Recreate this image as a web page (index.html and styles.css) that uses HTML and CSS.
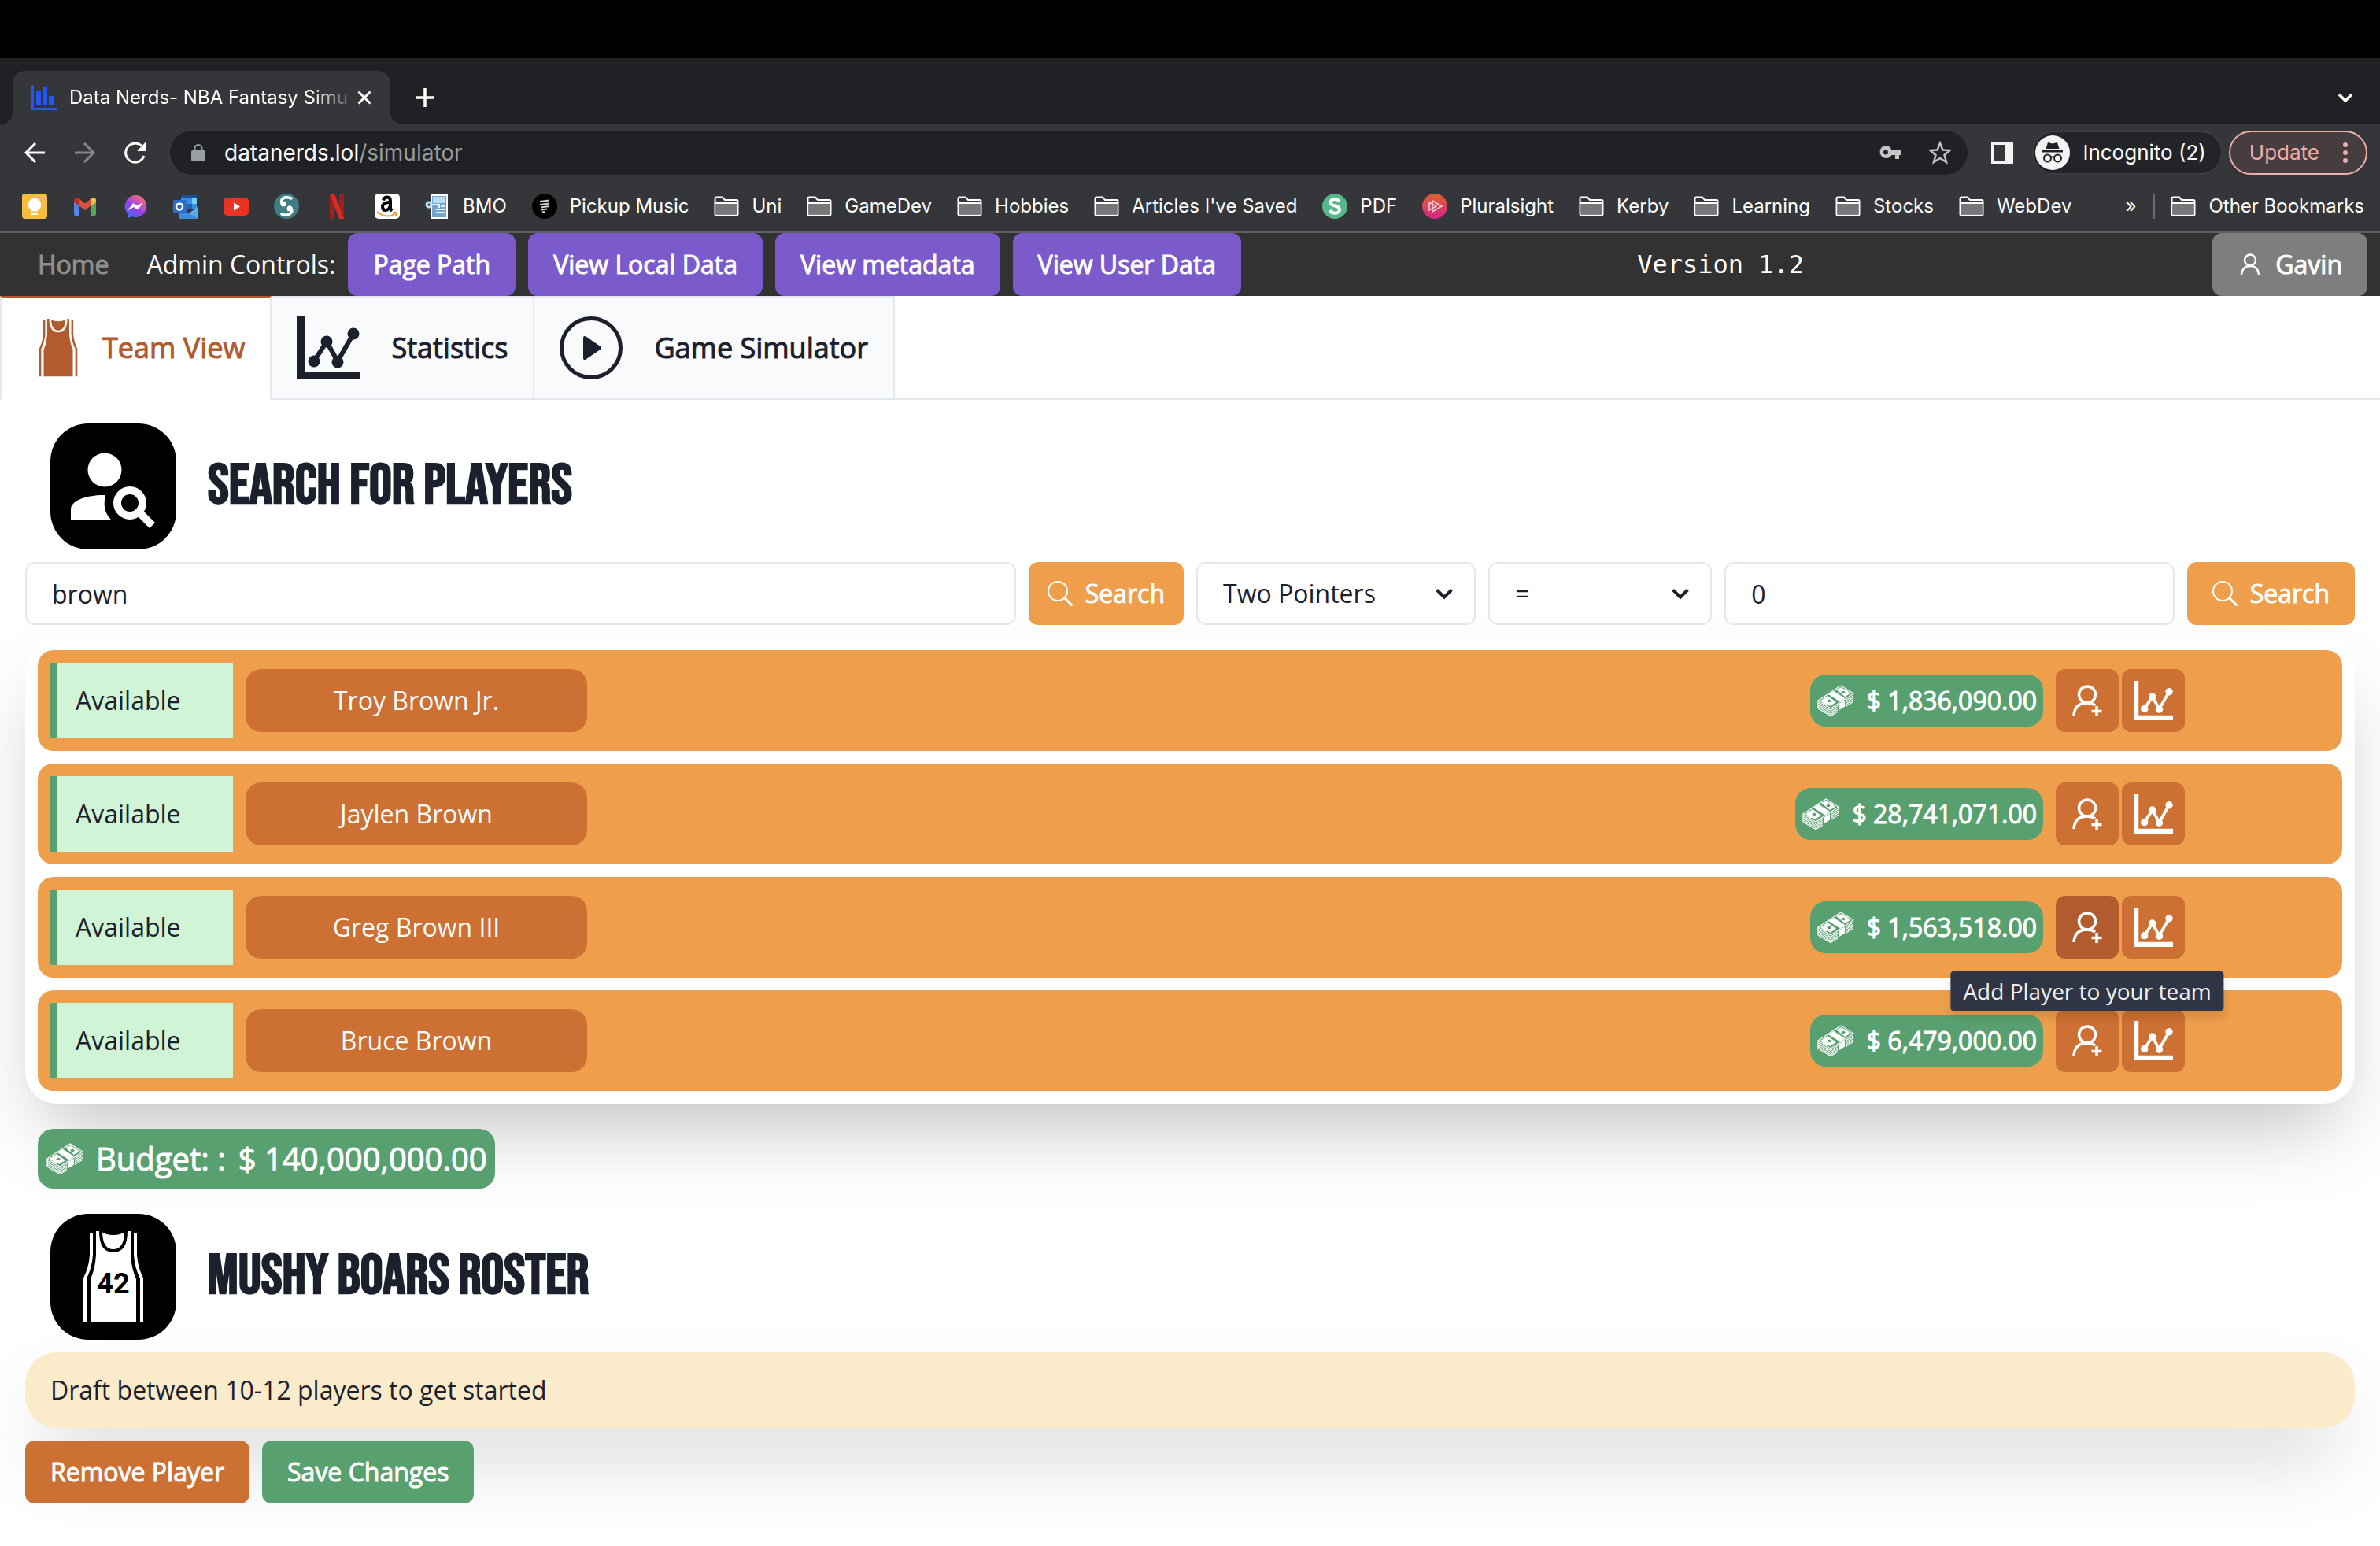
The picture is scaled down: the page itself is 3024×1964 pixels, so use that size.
FILE: index.html
```html
<!DOCTYPE html>
<html lang="en">
<head>
<meta charset="utf-8">
<title>Data Nerds- NBA Fantasy Simulator</title>
<link rel="stylesheet" href="styles.css">
</head>
<body>
<svg class="sprite" aria-hidden="true">
  <symbol id="folder" viewBox="0 0 32 26"><path d="M1.500 22.500V3Q1.500 1.500 3 1.500H11L14 5H29Q30.500 5 30.500 6.500V23Q30.500 24.500 29 24.500H3Q1.500 24.500 1.500 23Z" fill="#35363a" stroke="#fff" stroke-width="2"/><path d="M2.500 10H29.500V23.500H2.500Z" fill="#76777a"/><path d="M2 9H30" stroke="#fff" stroke-width="2"/></symbol>
  <symbol id="jersey" viewBox="0 0 76 116"><path d="M16 0H22Q28 5 38 5T54 0H60V30Q61 48 67 61V115H9V61Q15 48 16 30Z" fill="currentColor"/><path d="M10 2V30Q9 46 2 60V115M66 2V30Q67 46 74 60V115" fill="none" stroke="currentColor" stroke-width="4"/><path d="M22 0Q22 25 38 25T54 0" fill="none" stroke="var(--cut)" stroke-width="4"/></symbol>
  <symbol id="chart" viewBox="0 0 80 80"><path d="M0 0H10V70H80V80H0Z" fill="currentColor"/><path d="M22 57 38 32 52 57 72 22" fill="none" stroke="currentColor" stroke-width="6"/><g fill="currentColor"><circle cx="22" cy="57" r="7.500"/><circle cx="38" cy="32" r="7.500"/><circle cx="52" cy="58" r="7.500"/><circle cx="72" cy="22" r="7.500"/></g></symbol>
  <symbol id="lens" viewBox="0 0 32 32"><circle cx="13" cy="13" r="12" fill="none" stroke="currentColor" stroke-width="2"/><path d="M22 22 30.500 30.500" stroke="currentColor" stroke-width="3" stroke-linecap="round"/></symbol>
  <symbol id="adduser" viewBox="0 0 40 40"><circle cx="20" cy="12.500" r="10.500" fill="none" stroke="currentColor" stroke-width="3.500"/><path d="M3 39Q4 23 20 23Q26 23 30 26M32 27V40M25.500 33.500H38.500" fill="none" stroke="currentColor" stroke-width="3.500"/></symbol>
  <symbol id="cash" viewBox="0 0 48 40"><path d="M2 20 31 1 47 11 18 30Z" fill="none" stroke="currentColor" stroke-width="1.200"/><path d="M15 12 22 8 36 17 30 21.500Z" fill="currentColor"/><path d="M5 20 14 14 25 22 17 27Q15 24 11 25Z" fill="currentColor"/><path d="M25 6 32 3Q34 6 38 6L43 11 36 15Z" fill="currentColor"/><ellipse cx="16" cy="20.500" rx="2.500" ry="1.800" fill="#59a070"/><ellipse cx="34" cy="9.500" rx="2.500" ry="1.800" fill="#59a070"/><path d="M2 22.500 18 32.500 27 26.500M2 25 18 35 27 29M2 27.500 18 37.500 27 31.500M2 30 18 39.500 27 34M2 20V30M37 20 47 13.500M37 22.500 47 16M37 25 47 18.500M37 27.500 47 21" fill="none" stroke="currentColor" stroke-width="1.300"/><path d="M29 24 36 19.500V27.500L29 32Z" fill="currentColor"/></symbol>
  <symbol id="chevron" viewBox="0 0 24 24"><path d="M4 8 12 16 20 8" fill="none" stroke="currentColor" stroke-width="3.500"/></symbol>
</svg>

<div class="menu-gap"></div>
<header class="browser">
  <div class="tabstrip">
    <div class="browser-tab">
      <svg class="favicon" viewBox="0 0 32 32"><path d="M1.500 0V30.500H32" fill="none" stroke="#2456f5" stroke-width="3"/><path d="M6 8H12V26H6ZM14 2H20V26H14ZM22 14H28V26H22Z" fill="#2456f5"/></svg>
      <span class="browser-tab-title">Data Nerds- NBA Fantasy Simu</span>
      <button class="plain" aria-label="Close tab"><svg width="18" height="18" viewBox="0 0 18 18"><path d="M1.500 1.500 16.500 16.500M16.500 1.500 1.500 16.500" stroke="#fff" stroke-width="3"/></svg></button>
    </div>
    <button class="plain new-tab" aria-label="New tab"><svg width="26" height="26" viewBox="0 0 26 26"><path d="M13 1V25M1 13H25" stroke="#fff" stroke-width="3.500"/></svg></button>
    <button class="plain tab-search" aria-label="Search tabs"><svg width="24" height="24"><use href="#chevron"/></svg></button>
  </div>

  <div class="toolbar">
    <div class="history">
      <button class="plain" aria-label="Back"><svg width="28" height="28" viewBox="0 0 28 28"><path d="M27 14H3M15 2 3 14 15 26" fill="none" stroke="#fff" stroke-width="3"/></svg></button>
      <button class="plain" aria-label="Forward"><svg width="28" height="28" viewBox="0 0 28 28"><path d="M1 14H25M13 2 25 14 13 26" fill="none" stroke="#86878a" stroke-width="3"/></svg></button>
      <button class="plain" aria-label="Reload"><svg width="28" height="28" viewBox="0 0 28 28"><path d="M25 18A12 12 0 1 1 22 5.500" fill="none" stroke="#fff" stroke-width="3"/><path d="M27.500 0V12H16Z" fill="#fff"/></svg></button>
    </div>
    <div class="address">
      <svg width="18" height="22" viewBox="0 0 18 22"><rect y="8" width="18" height="14" rx="2" fill="#9aa0a6"/><path d="M4.500 9V5.500A4.500 4.500 0 0 1 13.500 5.500V9" fill="none" stroke="#9aa0a6" stroke-width="2"/></svg>
      <span class="url"><b>datanerds.lol</b>/simulator</span>
      <svg width="28" height="18" viewBox="0 0 28 18"><path fill="#c4c5c7" fill-rule="evenodd" d="M8 0A8 8 0 0 1 15.500 6H28V12H25V17H20V12H15.500A8 8 0 1 1 8 0ZM8 5.500A3 3 0 1 0 8 11.500 3 3 0 0 0 8 5.500Z"/></svg>
      <svg width="30" height="30" viewBox="0 0 30 30"><path d="M15 3 18.500 11.500 27.500 12 20.500 18 23 27 15 22 7 27 9.500 18 2.500 12 11.500 11.500Z" fill="none" stroke="#c4c5c7" stroke-width="2.500"/></svg>
    </div>
    <svg class="panel-icon" width="28" height="28" viewBox="0 0 28 28"><path fill="#f1f3f4" fill-rule="evenodd" d="M0 0H28V28H0ZM4 4V24H18V4Z"/></svg>
    <div class="incognito">
      <svg width="44" height="44" viewBox="0 0 44 44"><circle cx="22" cy="22" r="22" fill="#f1f3f4"/><path d="M16 9 22 10.500 28 9 30.500 17H13.500ZM9 19H35V21.500H9Z" fill="#202124"/><g fill="none" stroke="#202124" stroke-width="2"><circle cx="15.500" cy="29" r="4.500"/><circle cx="28.500" cy="29" r="4.500"/><path d="M20 28Q22 26.500 24 28"/></g></svg>
      <span>Incognito (2)</span>
    </div>
    <button class="update">Update <svg width="6" height="28" viewBox="0 0 6 28" fill="#f0aea6"><circle cx="3" cy="4" r="3"/><circle cx="3" cy="14" r="3"/><circle cx="3" cy="24" r="3"/></svg></button>
  </div>

  <nav class="bookmarks" aria-label="Bookmarks">
    <a href="#keep" aria-label="Keep"><svg width="32" height="32" viewBox="0 0 32 32"><rect width="32" height="32" rx="4" fill="#f5bd42"/><path d="M16 6A8 8 0 0 1 20 21V22.500H12V21A8 8 0 0 1 16 6ZM12 24H20V27H12Z" fill="#fff"/></svg></a>
    <a href="#gmail" aria-label="Gmail"><svg width="32" height="32" viewBox="0 0 32 32"><path d="M2 10 9 15V28H4Q2 28 2 26Z" fill="#5383ec"/><path d="M30 10 23 15V28H28Q30 28 30 26Z" fill="#58a65c"/><path d="M2 11V8Q3 3 8 6L9 7V16Z" fill="#b63227"/><path d="M30 11V8Q29 3 24 6L23 7V16Z" fill="#f1bf42"/><path d="M8 6 16 12.500 24 6V15L16 21 8 15Z" fill="#d95040"/></svg></a>
    <a href="#messenger" aria-label="Messenger"><svg width="32" height="32" viewBox="0 0 32 32"><defs><linearGradient id="msg" x1="0" y1="1" x2=".7" y2="0"><stop offset="0" stop-color="#2d7bf6"/><stop offset=".5" stop-color="#9040f2"/><stop offset="1" stop-color="#f76d7a"/></linearGradient></defs><path d="M16 2A14 14 0 1 1 11 29L7 31V26A14 14 0 0 1 16 2Z" fill="url(#msg)"/><path d="M7 20.500 13.500 12.500 18 16 25 12 19 20 14 16.500Z" fill="#fff" stroke="#fff" stroke-linejoin="round"/></svg></a>
    <a href="#outlook" aria-label="Outlook"><svg width="32" height="32" viewBox="0 0 32 32"><path d="M10 2H30V20H10Z" fill="#3a8ee0"/><path d="M10 2H30V6H10Z" fill="#1b5297"/><path d="M24 6H30V13H24Z" fill="#6fd0fb"/><path d="M17 13H24V20H17Z" fill="#1c64b8"/><path d="M8 18 20 25 32 16V32H8Z" fill="#55aee8"/><path d="M8 18 32 32H8Z" fill="#3e8bd6"/><rect y="8" width="17" height="17" rx="1" fill="#2a6dcc"/><circle cx="8" cy="16.500" r="4" fill="none" stroke="#fff" stroke-width="2.500"/></svg></a>
    <a href="#youtube" aria-label="YouTube"><svg width="32" height="32" viewBox="0 0 32 32"><rect y="5" width="32" height="23" rx="5" fill="#ea3323"/><path d="M13 11.500 21 16.500 13 21.500Z" fill="#fff"/></svg></a>
    <a href="#scribe" aria-label="Scribe"><svg width="32" height="32" viewBox="0 0 32 32"><circle cx="16" cy="16" r="16" fill="#407d85"/><path d="M22 6C12 2 6 9 12 14M20 17C27 22 20 30 10 26" fill="none" stroke="#fff" stroke-width="3.500" stroke-linecap="round"/><circle cx="12" cy="13" r="3.500" fill="#fff"/><circle cx="20" cy="19" r="3.500" fill="#fff"/></svg></a>
    <a href="#netflix" aria-label="Netflix"><svg width="32" height="32" viewBox="0 0 32 32"><path d="M7 0H13V32H7ZM19 0H25V32H19Z" fill="#9e1f1b"/><path d="M7 0H13L25 32H19Z" fill="#d92c27"/></svg></a>
    <a href="#amazon" aria-label="Amazon"><svg width="32" height="32" viewBox="0 0 32 32"><rect width="32" height="32" rx="5" fill="#fff"/><path d="M11 8.500Q12 4.500 16 4.500T20 9V18Q20 20 22 22" fill="none" stroke="#000" stroke-width="4"/><path d="M19 11Q10 11 10 17Q10 21 14 21Q18 21 19.500 16" fill="none" stroke="#000" stroke-width="4"/><path d="M3 23Q15 33 27 25M23 24H28L27 28" fill="none" stroke="#f09c38" stroke-width="2"/></svg></a>
    <a href="#bmo"><svg width="32" height="32" viewBox="0 0 32 32"><path d="M8 2H28V31H8Z" fill="#6fa5cf" stroke="#fff" stroke-width="2"/><path d="M10 4H26V12H10Z" fill="#b9dcf2"/><circle cx="5" cy="14" r="3" fill="none" stroke="#bcdcf4" stroke-width="3"/><path d="M8 14H18V18M14 20H25M14 24H25M20 16H25" stroke="#e6f3fc" stroke-width="2" fill="none"/></svg>BMO</a>
    <a href="#pickup"><svg width="32" height="32" viewBox="0 0 32 32"><circle cx="16" cy="16" r="16"/><path d="M10 10 22 8.500M10 14 22 12.500M11 17.500 22 16M12 20.500 19 19.500M13 23.500 16 23" stroke="#cfcfcf" stroke-width="2"/></svg>Pickup Music</a>
    <a href="#uni"><svg width="32" height="26"><use href="#folder"/></svg>Uni</a>
    <a href="#gamedev"><svg width="32" height="26"><use href="#folder"/></svg>GameDev</a>
    <a href="#hobbies"><svg width="32" height="26"><use href="#folder"/></svg>Hobbies</a>
    <a href="#articles"><svg width="32" height="26"><use href="#folder"/></svg>Articles I've Saved</a>
    <a href="#pdf"><svg width="32" height="32" viewBox="0 0 32 32"><circle cx="16" cy="16" r="16" fill="#55b98a"/><path d="M22 10C18 5 10 7 10.500 11.500C11 17 22 14 22 20C22 26 12 26 9.500 21" fill="none" stroke="#fff" stroke-width="4"/></svg>PDF</a>
    <a href="#pluralsight"><svg width="32" height="32" viewBox="0 0 32 32"><defs><linearGradient id="ps" x1="0" y1="0" x2="0" y2="1"><stop offset="0" stop-color="#e0622f"/><stop offset="1" stop-color="#d6248c"/></linearGradient></defs><circle cx="16" cy="16" r="16" fill="url(#ps)"/><path d="M13 9 25 16 13 23ZM9 11 18 16 9 21Z" fill="none" stroke="#fbd3d8" stroke-width="1.500"/></svg>Pluralsight</a>
    <a href="#kerby"><svg width="32" height="26"><use href="#folder"/></svg>Kerby</a>
    <a href="#learning"><svg width="32" height="26"><use href="#folder"/></svg>Learning</a>
    <a href="#stocks"><svg width="32" height="26"><use href="#folder"/></svg>Stocks</a>
    <a href="#webdev"><svg width="32" height="26"><use href="#folder"/></svg>WebDev</a>
    <button class="plain more" aria-label="More bookmarks">»</button>
    <a class="other" href="#other"><svg width="32" height="26"><use href="#folder"/></svg>Other Bookmarks</a>
  </nav>
</header>

<nav class="site-nav">
  <a class="home" href="#home">Home</a>
  <span class="admin">Admin Controls:</span>
  <button class="btn purple">Page Path</button>
  <button class="btn purple">View Local Data</button>
  <button class="btn purple">View metadata</button>
  <button class="btn purple">View User Data</button>
  <code class="version">Version 1.2</code>
  <button class="btn account"><svg width="32" height="32" viewBox="0 0 32 32"><g fill="none" stroke="currentColor" stroke-width="2.500"><circle cx="16" cy="10.500" r="7"/><path d="M5 29Q6 18 16 18T27 29"/></g></svg>Gavin</button>
</nav>

<div class="tabs" role="tablist">
  <button class="tab active" role="tab" aria-selected="true"><svg width="80" height="74"><use href="#jersey"/></svg>Team View</button>
  <button class="tab wide" role="tab"><svg width="80" height="80"><use href="#chart"/></svg>Statistics</button>
  <button class="tab wide" role="tab"><svg width="80" height="80" viewBox="0 0 80 80"><circle cx="40" cy="40" r="37.500" fill="none" stroke="currentColor" stroke-width="5"/><path d="M32 27 51 40 32 53Z" fill="currentColor" stroke="currentColor" stroke-width="4" stroke-linejoin="round"/></svg>Game Simulator</button>
</div>

<main>
  <div class="section-title">
    <span class="title-icon"><svg width="160" height="160" viewBox="0 0 160 160" fill="#fff"><circle cx="69" cy="59" r="21.500"/><path d="M26 122V109C26 96 52 90 70 91C67 104 69 114 77 122Z"/><circle cx="101" cy="101" r="16" fill="none" stroke="#fff" stroke-width="10"/><path d="M111 118 118 111 133 126 126 133Z"/></svg></span>
    <h2>SEARCH FOR PLAYERS</h2>
  </div>

  <div class="filters">
    <form class="filter by-name">
      <input class="field" type="text" value="brown" aria-label="Player name">
      <button class="btn orange compact" type="button"><svg width="32" height="32"><use href="#lens"/></svg>Search</button>
    </form>
    <form class="filter by-stat">
      <span class="select"><select class="field" aria-label="Statistic"><option>Two Pointers</option></select><svg width="28" height="28"><use href="#chevron"/></svg></span>
      <span class="select"><select class="field" aria-label="Comparison"><option>=</option></select><svg width="28" height="28"><use href="#chevron"/></svg></span>
      <input class="field" type="text" value="0" aria-label="Value">
      <button class="btn orange" type="button"><svg width="32" height="32"><use href="#lens"/></svg>Search</button>
    </form>
  </div>

  <ul class="results">
    <li class="player">
      <span class="status">Available</span><span class="name">Troy Brown Jr.</span>
      <span class="money"><svg width="48" height="40"><use href="#cash"/></svg>$ 1,836,090.00</span>
      <span class="actions"><button class="icon-btn" aria-label="Add player"><svg width="40" height="40"><use href="#adduser"/></svg></button><button class="icon-btn" aria-label="Statistics"><svg width="50" height="50"><use href="#chart"/></svg></button></span>
    </li>
    <li class="player">
      <span class="status">Available</span><span class="name">Jaylen Brown</span>
      <span class="money"><svg width="48" height="40"><use href="#cash"/></svg>$ 28,741,071.00</span>
      <span class="actions"><button class="icon-btn" aria-label="Add player"><svg width="40" height="40"><use href="#adduser"/></svg></button><button class="icon-btn" aria-label="Statistics"><svg width="50" height="50"><use href="#chart"/></svg></button></span>
    </li>
    <li class="player">
      <span class="status">Available</span><span class="name">Greg Brown III</span>
      <span class="money"><svg width="48" height="40"><use href="#cash"/></svg>$ 1,563,518.00</span>
      <span class="actions"><button class="icon-btn hovered" aria-describedby="add-tip" aria-label="Add player"><svg width="40" height="40"><use href="#adduser"/></svg><span class="tooltip" id="add-tip" role="tooltip">Add Player to your team</span></button><button class="icon-btn" aria-label="Statistics"><svg width="50" height="50"><use href="#chart"/></svg></button></span>
    </li>
    <li class="player">
      <span class="status">Available</span><span class="name">Bruce Brown</span>
      <span class="money"><svg width="48" height="40"><use href="#cash"/></svg>$ 6,479,000.00</span>
      <span class="actions"><button class="icon-btn" aria-label="Add player"><svg width="40" height="40"><use href="#adduser"/></svg></button><button class="icon-btn" aria-label="Statistics"><svg width="50" height="50"><use href="#chart"/></svg></button></span>
    </li>
  </ul>

  <div class="money budget"><svg width="48" height="40"><use href="#cash"/></svg><span>Budget: :</span><span>$ 140,000,000.00</span></div>

  <div class="section-title">
    <span class="title-icon"><svg width="160" height="160" viewBox="0 0 160 160"><use href="#jersey" x="42" y="22" width="76" height="116"/><text class="number" x="80" y="101" text-anchor="middle">42</text></svg></span>
    <h2>MUSHY BOARS ROSTER</h2>
  </div>

  <p class="notice">Draft between 10-12 players to get started</p>
  <div class="roster-actions">
    <button class="btn brown">Remove Player</button>
    <button class="btn green">Save Changes</button>
  </div>
</main>
</body>
</html>
```
FILE: styles.css
```css
* { box-sizing: border-box; }
body {
  margin: 0;
  background: #fff;
  color: #1c202c;
  font: 400 32px/48px "Open Sans", sans-serif;
  --cut: #fff;
  overflow-x: hidden;
}
button, input, select { font: inherit; color: inherit; margin: 0; }
button { border: 0; cursor: pointer; }
a { color: inherit; text-decoration: none; }
svg { flex: none; display: block; }
h2, p, ul { margin: 0; padding: 0; }
.sprite { position: absolute; width: 0; height: 0; }
.plain { padding: 0; background: none; display: flex; }

/* Browser window */
.menu-gap { height: 74px; background: #000; }
.browser {
  background: #35363a;
  color: #fff;
  font: 400 24px/32px Inter, sans-serif;
  border-bottom: 2px solid #5f6065;
}
.tabstrip {
  display: flex;
  align-items: center;
  height: 84px;
  padding: 16px 32px 0 16px;
  background: #202124;
}
.browser-tab {
  position: relative;
  display: flex;
  align-items: center;
  width: 480px;
  height: 68px;
  padding: 0 24px;
  border-radius: 16px 16px 0 0;
  background: #35363a;
}
.browser-tab::before, .browser-tab::after {
  content: "";
  position: absolute;
  bottom: 0;
  width: 16px;
  height: 16px;
}
.browser-tab::before { left: -16px; background: radial-gradient(circle at 0 0, #202124 16px, #35363a 16px); }
.browser-tab::after { right: -16px; background: radial-gradient(circle at 100% 0, #202124 16px, #35363a 16px); }
.favicon { width: 32px; height: 32px; }
.browser-tab-title {
  flex: 1;
  margin: 0 0 0 16px;
  white-space: nowrap;
  mask-image: linear-gradient(to right, #000 84%, transparent);
}
.new-tab { margin-left: 31px; }
.tab-search { margin-left: auto; }
.toolbar {
  display: flex;
  align-items: center;
  height: 72px;
  padding: 0 16px;
  font-size: 26px;
}
.history { display: flex; gap: 36px; width: 200px; padding-left: 14px; }
.address {
  flex: 1;
  display: flex;
  align-items: center;
  gap: 34px;
  height: 56px;
  padding: 0 20px 0 27px;
  border-radius: 28px;
  background: #202124;
}
.url { flex: 1; margin-left: -10px; color: #9a9b9e; font-size: 28px; }
.url b { color: #fff; font-weight: 400; }
.panel-icon { margin: 0 24px 0 30px; }
.incognito {
  display: flex;
  align-items: center;
  gap: 16px;
  height: 56px;
  margin-right: 8px;
  padding: 0 19px 0 2px;
  border: 2px solid #3c3d41;
  border-radius: 28px;
  background: #232328;
}
.update {
  display: flex;
  align-items: center;
  gap: 30px;
  height: 56px;
  padding: 0 23px 0 24px;
  border: 2px solid #f0aea6;
  border-radius: 28px;
  background: #463d40;
  color: #f0aea6;
}
.bookmarks {
  display: flex;
  align-items: center;
  gap: 32px;
  height: 64px;
  padding: 0 20px 0 28px;
  white-space: nowrap;
}
.bookmarks a { display: flex; align-items: center; gap: 16px; }
.more { margin-left: auto; }
.bookmarks .other {
  height: 32px;
  margin-left: -10px;
  padding-left: 20px;
  border-left: 2px solid #6b6c70;
}

/* Site navigation */
.site-nav {
  display: flex;
  align-items: center;
  gap: 16px;
  height: 80px;
  padding: 0 16px 0 48px;
  background: #323232;
  color: #fff;
}
.home, .btn, .tab, .money { -webkit-text-stroke: 1px currentColor; }
.home { margin-right: 32px; color: #8f8f8f; }
.version {
  margin: 0 auto;
  padding-right: 16px;
  font: 400 32px/48px "DejaVu Sans Mono", monospace;
}
.btn {
  display: flex;
  align-items: center;
  justify-content: center;
  gap: 16px;
  height: 80px;
  padding: 0 32px;
  border-radius: 12px;
  color: #fff;
  white-space: nowrap;
}
.purple { background: #7b5bcc; }
.account { background: #7e7e7e; }
.orange { background: #ef9e4b; }
.brown { background: #cd7033; }
.green { background: #59a070; }

/* Page tabs */
.tabs {
  display: flex;
  height: 132px;
  box-shadow: inset 0 -2px #e3e7ee;
}
.tab {
  display: flex;
  align-items: center;
  gap: 16px;
  padding: 0 32px;
  border: solid #e3e7ee;
  border-width: 2px 2px 2px 0;
  background: #f9fafc;
  font-size: 36px;
}
.tab.wide { gap: 40px; }
.tab.active {
  border-color: #b15b2e #e3e7ee #fff;
  border-left-width: 2px;
  background: #fff;
  color: #b15b2e;
}

/* Simulator */
main { display: flex; flex-direction: column; gap: 16px; padding: 30px 32px 54px; }
.section-title { display: flex; align-items: center; gap: 40px; margin-left: 32px; }
.title-icon {
  --cut: #000;
  border-radius: 48px;
  background: #000;
  color: #fff;
}
.number { font: 700 36px Roboto, sans-serif; }
h2 { font: 700 72px/96px "Bebas Neue", "Liberation Sans Narrow", sans-serif; }
.filters { display: grid; grid-template-columns: 1fr 1fr; gap: 16px; }
.filter { display: grid; gap: 16px; }
.by-name { grid-template-columns: 1fr auto; }
.by-stat { grid-template-columns: 355fr 284fr 571fr auto; }
.field {
  min-width: 0;
  width: 100%;
  height: 80px;
  padding: 0 32px;
  border: 2px solid #e3e7ee;
  border-radius: 12px;
  background: #fff;
  appearance: none;
}
.compact { padding: 0 24px; }
.select { display: grid; align-items: center; }
.select > * { grid-area: 1 / 1; }
.select svg { justify-self: end; margin-right: 26px; pointer-events: none; }
.results {
  display: flex;
  flex-direction: column;
  gap: 16px;
  padding: 16px;
  border-radius: 40px;
  background: #fff;
  box-shadow: 0 50px 100px -24px rgba(0, 0, 0, .25);
  list-style: none;
}
.player {
  display: flex;
  align-items: center;
  gap: 16px;
  height: 128px;
  padding: 0 200px 0 16px;
  border-radius: 20px;
  background: #ef9e4b;
}
.status {
  width: 232px;
  padding: 24px;
  border-left: 8px solid #59a070;
  background: #d0f5d6;
}
.name {
  width: 434px;
  padding: 16px;
  border-radius: 20px;
  background: #cd7033;
  color: #fff;
  text-align: center;
}
.money {
  display: flex;
  align-items: center;
  gap: 16px;
  height: 66px;
  margin-left: auto;
  padding: 0 8px;
  border-radius: 20px;
  background: #59a070;
  color: #fff;
}
.actions { display: flex; gap: 4px; }
.icon-btn {
  position: relative;
  display: flex;
  align-items: center;
  justify-content: center;
  width: 80px;
  height: 80px;
  padding: 0;
  border-radius: 12px;
  background: #cd7033;
  color: #fff;
}
.hovered { background: #b15b2e; }
.tooltip {
  position: absolute;
  z-index: 1;
  top: 96px;
  left: 50%;
  transform: translateX(-50%);
  padding: 4px 16px;
  border-radius: 4px;
  background: #2f3545;
  box-shadow: 0 8px 12px rgba(0, 0, 0, .12);
  color: #f0f0f2;
  font-size: 28px;
  line-height: 42px;
  white-space: nowrap;
}
.budget {
  align-self: flex-start;
  height: 76px;
  margin: 16px 0 16px 16px;
  padding: 0 10px;
  font-size: 40px;
}
.notice {
  padding: 24px 32px;
  border-radius: 40px;
  background: #faebcb;
  box-shadow: 0 50px 100px -24px rgba(0, 0, 0, .25);
}
.roster-actions { display: flex; gap: 16px; }
```
